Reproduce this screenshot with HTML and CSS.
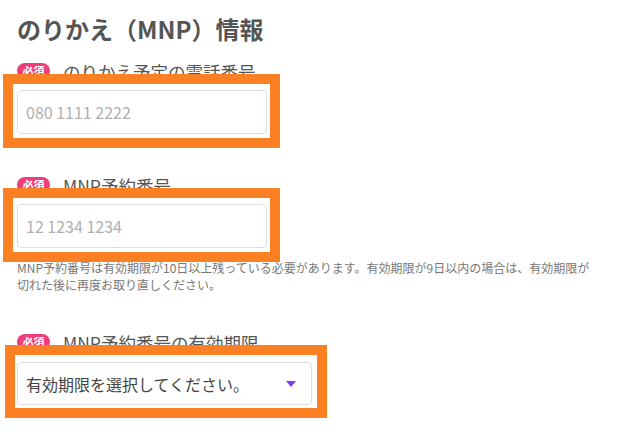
FILE: index.html
```
<html>
<head>
  <meta charset="utf-8">
  <link rel="stylesheet" href="styles.css">
</head>
<body>
  <h1 class="title">のりかえ（MNP）情報</h1>

  <div class="field field-first">
    <div class="field-label">
      <span class="badge">必須</span>
      <span class="label-text">のりかえ予定の電話番号</span>
    </div>
    <div class="mark">
      <input class="text-input" type="text" placeholder="080 1111 2222">
    </div>
  </div>

  <div class="field">
    <div class="field-label">
      <span class="badge">必須</span>
      <span class="label-text">MNP予約番号</span>
    </div>
    <div class="mark">
      <input class="text-input" type="text" placeholder="12 1234 1234">
    </div>
    <p class="help">MNP予約番号は有効期限が10日以上残っている必要があります。有効期限が9日以内の場合は、有効期限が切れた後に再度お取り直しください。</p>
  </div>

  <div class="field field-last">
    <div class="field-label">
      <span class="badge">必須</span>
      <span class="label-text">MNP予約番号の有効期限</span>
    </div>
    <div class="mark mark-select">
      <div class="select-box">
        <span>有効期限を選択してください。</span>
        <span class="arrow"></span>
      </div>
    </div>
  </div>
</body>
</html>
```

FILE: styles.css
```
body {
  margin: 0;
  padding: 0 17px;
  background-color: #ffffff;
  font-family: "Noto Sans CJK JP", "Noto Sans", sans-serif;
  color: #555555;
}

.title {
  margin: 12px 0 0;
  font-size: 24px;
  line-height: 34px;
  font-weight: bold;
  color: #555555;
}

.field {
  margin-top: 25px;
}

.field-first {
  margin-top: 13px;
}

.field-last {
  margin-top: 37px;
}

.field-label {
  display: flex;
  align-items: center;
  height: 24px;
}

.badge {
  display: inline-block;
  width: 33px;
  height: 16px;
  line-height: 16px;
  border-radius: 8px;
  background-color: #ef3d7c;
  color: #ffffff;
  font-size: 11px;
  font-weight: bold;
  text-align: center;
}

.label-text {
  margin-left: 13px;
  font-size: 17.5px;
  color: #555555;
}

/* orange highlight frame laid over each control */
.mark {
  position: relative;
  display: flex;
  width: fit-content;
  margin: -9px 0 0 -14px;
  padding: 6px 3px 4px 4px;
  border: 10px solid #fa8023;
  background-color: #ffffff;
}

.mark-select {
  margin-left: -12px;
  padding: 7px 5px 3px 2px;
}

.text-input {
  box-sizing: border-box;
  width: 250px;
  height: 44px;
  padding: 0 8px;
  border: 1px solid #dddddd;
  border-radius: 4px;
  font-family: "Noto Sans CJK JP", sans-serif;
  font-size: 16px;
  color: #444444;
  outline: none;
}

.text-input::placeholder {
  color: #b0b0b0;
}

.help {
  margin: -3px 0 0;
  max-width: 580px;
  font-size: 12px;
  line-height: 17px;
  color: #777777;
}

.select-box {
  box-sizing: border-box;
  display: flex;
  align-items: center;
  justify-content: space-between;
  width: 295px;
  height: 43px;
  padding: 0 15px 0 8px;
  border: 1px solid #dddddd;
  border-radius: 4px;
  font-size: 16px;
  color: #444444;
}

.arrow {
  width: 0;
  height: 0;
  border-left: 5px solid transparent;
  border-right: 5px solid transparent;
  border-top: 6px solid #7a3cff;
}
```
